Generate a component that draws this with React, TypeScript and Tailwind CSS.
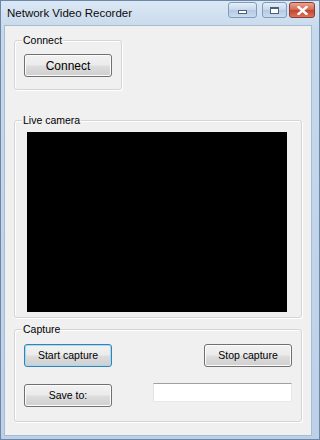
import React from 'react';

const font = { fontFamily: '"Liberation Sans", Arial, sans-serif' };

// Vista-style push button
const Btn = ({ label, focused = false, big = false }: { label: string; focused?: boolean; big?: boolean }) => (
  <div
    className={
      'w-[88px] h-[23px] rounded-[3px] border flex items-center justify-center text-black ' +
      'bg-[linear-gradient(to_bottom,#f2f2f2_0%,#ebebeb_48%,#dddddd_52%,#cfcfcf_100%)] ' +
      (focused
        ? 'border-[#3c7fb1] shadow-[inset_0_0_0_1px_#9fdcfa]'
        : 'border-[#707070] shadow-[inset_0_0_0_1px_#fcfcfc]') +
      (big ? ' text-[12px]' : ' text-[10.5px]')
    }
  >
    {label}
  </div>
);

const Group = ({ title, className, children }: { title: string; className: string; children: React.ReactNode }) => (
  <div className={'relative rounded-[3px] border border-[#d5d5d5] shadow-[inset_1px_1px_0_#ffffff,1px_1px_0_#ffffff] ' + className}>
    <span className="absolute left-[7px] top-[-8px] bg-[#f0f0f0] px-[1px] text-[10.5px] leading-[14px] text-black">
      {title}
    </span>
    {children}
  </div>
);

export default function App() {
  return (
    <div
      className="w-[320px] h-[440px] flex flex-col bg-[linear-gradient(to_bottom,#dbe7f4,#c6d8eb_30px,#bcd1e8)] border border-[#6d87a8] overflow-hidden"
      style={font}
    >
      {/* title bar */}
      <div className="h-[24px] flex items-start justify-between shrink-0">
        <span className="pl-[6px] pt-[5px] text-[11.5px] leading-[14px] text-[#0c0c0c]">Network Video Recorder</span>
        <div className="flex items-start pr-[4px] pt-[1px]">
          <div className="w-[29px] h-[16px] rounded-[3px] border border-[#7f9cbf] bg-[linear-gradient(to_bottom,#e6eef8,#c6d7ec_50%,#b3c8e2_50%,#cbdbee)] flex items-center justify-center">
            <div className="w-[9px] h-[4px] border border-[#4a5f7a] bg-white mt-[4px]" />
          </div>
          <div className="w-[25px] h-[16px] ml-[5px] rounded-[3px] border border-[#7f9cbf] bg-[linear-gradient(to_bottom,#e6eef8,#c6d7ec_50%,#b3c8e2_50%,#cbdbee)] flex items-center justify-center">
            <div className="w-[9px] h-[7px] border border-[#4a5f7a] border-t-2 bg-white" />
          </div>
          <div className="w-[26px] h-[16px] ml-[2px] rounded-[3px] border border-[#8a3b36] bg-[linear-gradient(to_bottom,#e8a493,#d4664f_50%,#c4422c_50%,#d8745a)] flex items-center justify-center">
            <svg width="11" height="9" viewBox="0 0 11 9">
              <path d="M1.5 1 L9.5 8 M9.5 1 L1.5 8" stroke="#ffffff" strokeWidth="2.4" strokeLinecap="square" />
            </svg>
          </div>
        </div>
      </div>

      {/* client area */}
      <div className="flex-1 ml-[3px] mr-[7px] mb-[3px] bg-[#f0f0f0] flex flex-col pl-[9px] pt-[14px] border border-[#a7bbd3]">
        <Group title="Connect" className="w-[108px] h-[50px] pl-[9px] pt-[13px]">
          <Btn label="Connect" big />
        </Group>

        <Group title="Live camera" className="w-[288px] h-[198px] mt-[30px] pl-[12px] pt-[11px]">
          <div className="w-[260px] h-[180px] bg-black" />
        </Group>

        <Group title="Capture" className="w-[288px] h-[93px] mt-[11px] px-[9px] pt-[14px] flex flex-col">
          <div className="flex justify-between">
            <Btn label="Start capture" focused />
            <Btn label="Stop capture" />
          </div>
          <div className="flex justify-between items-start mt-[17px]">
            <Btn label="Save to:" />
            <div className="w-[139px] h-[19px] mt-[-1px] bg-white border border-[#abadb3] border-t-[#a0a0a0] border-r-[#e3e9ef] border-b-[#e3e9ef] border-l-[#e2e3ea]" />
          </div>
        </Group>
      </div>
    </div>
  );
}
